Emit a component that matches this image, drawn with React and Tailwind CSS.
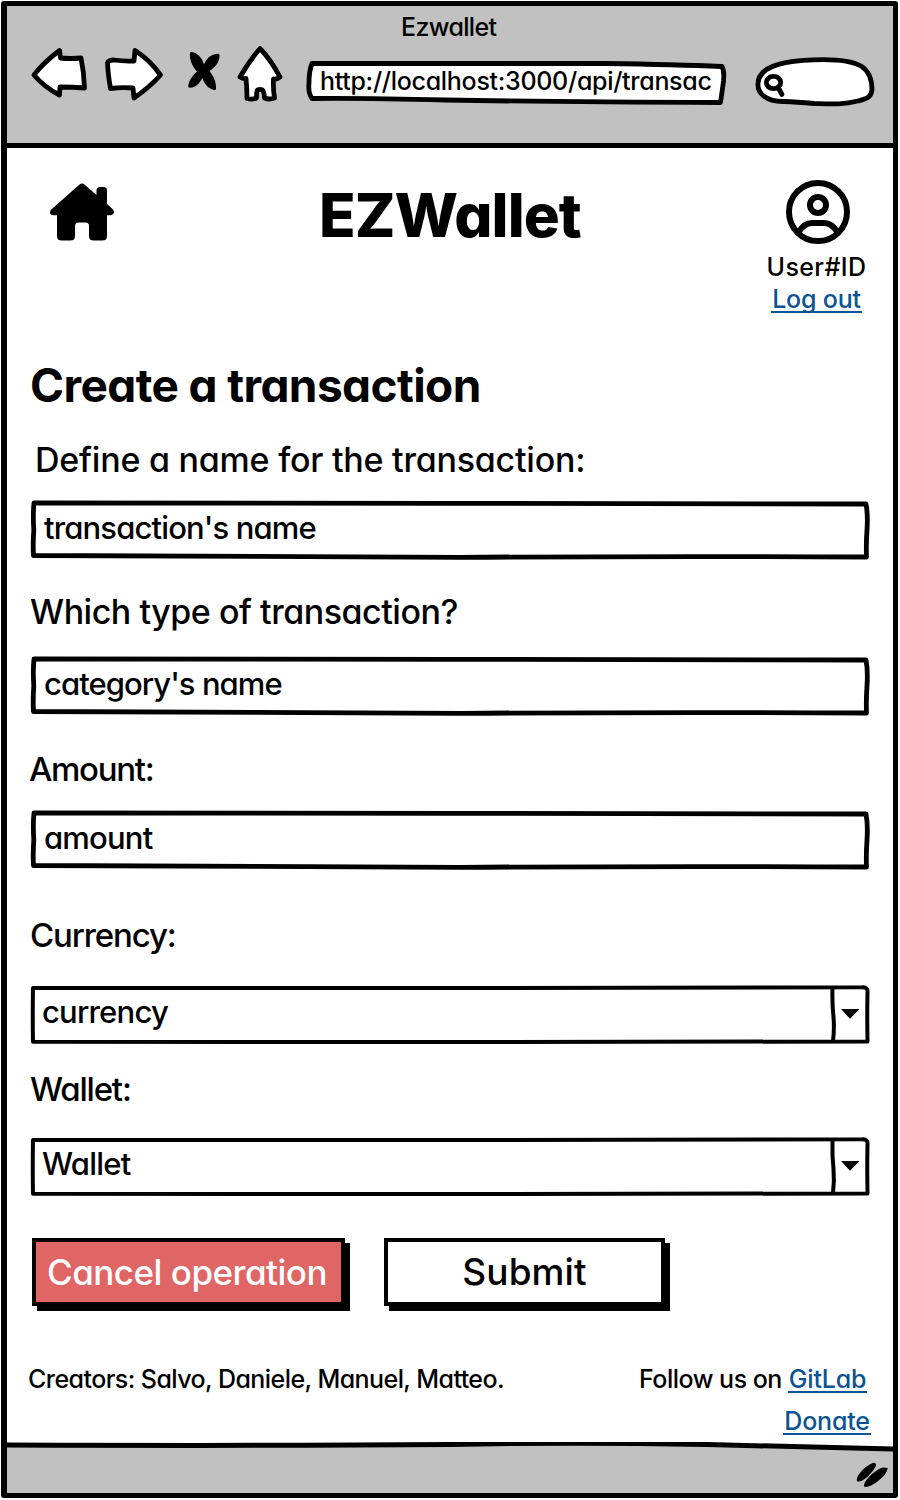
import React from "react";

const outline = { fill: "#fff", stroke: "#000", strokeWidth: 4.8, strokeLinejoin: "round", strokeLinecap: "round" };

function BackArrow() {
  return (
    <svg className="ml-[24px] mt-[40px] h-[54px] w-[58px] shrink-0" viewBox="0 0 58 54" {...outline}>
      <path d="M3 29 Q12 17 28.5 4.5 L29.5 12 Q40 13 50 12 Q53 26 53.5 42 Q42 41 29 41 L28.5 49 Q13 41 3 29Z" />
    </svg>
  );
}

function ForwardArrow() {
  return (
    <svg className="ml-[15px] mt-[40px] h-[57px] w-[60px] shrink-0" viewBox="0 0 60 57" {...outline}>
      <path d="M3.5 17 Q4.500 14 10 14 Q20 15.500 30 15 L31 4.500 Q46 14 56.500 29 Q46 41 30 52 L29 42 Q18 41 6.500 42.500 Q4 28 3.500 17Z" />
    </svg>
  );
}

function StopCross() {
  return (
    <svg className="ml-[21px] mt-[44px] h-[42px] w-[36px] shrink-0" viewBox="0 0 36 42">
      <path d="M5 2.500 Q5.500 1.500 8 2.200 C14 4 17.500 9 19 14.500 C21 9 26 4 33 3.800 Q34.600 3.800 34.600 5.500 C34.600 12 30.500 17 24.500 21 C28.500 26 31.500 32 31 39 Q30.800 40.500 29 40 C23 38.500 19.500 34 17.300 28 C14.500 33.500 11 37.500 5 37.800 Q3 38 3.300 36 C3.800 30.500 7.500 25.500 12 21.500 C8 17 4 10 5 2.500Z" />
    </svg>
  );
}

function HomeOutline() {
  return (
    <svg className="ml-[14px] mt-[39px] h-[58px] w-[50px] shrink-0" viewBox="0 0 50 58" {...outline}>
      <path d="M25 3.500 Q36 15 45 32 Q41 35 38.500 34 Q38 44 39.500 53 Q34 55 29.500 53 Q29 46 27.500 45 Q25 44 22.500 45 Q21.500 46 21.500 53 Q17 55 12 53.500 Q12 43 11 33.500 Q8 34 5 32 Q15 15 25 3.500Z" />
    </svg>
  );
}

function House() {
  return (
    <svg className="ml-[42px] mt-[34px] h-[60px] w-[66px] shrink-0" viewBox="0 0 66 60">
      <path d="M30.500 2.600 Q33 0.600 35.500 2.600 L47.500 13 V8.500 Q47.500 5 51 5 H54.500 Q58 5 58 8.500 V22 L64 27.500 Q65.500 29.500 64.500 31.500 Q63.500 33.200 61.500 33.200 H58 V54 Q58 58.500 53.500 58.500 H44.500 Q40 58.500 40 54 V44 Q40 40.500 36.500 40.500 H29.500 Q26 40.500 26 44 V54 Q26 58.500 21.500 58.500 H12.500 Q8 58.500 8 54 V33.200 H4 Q2 33.200 1.200 31.500 Q0.500 29.500 2 27.800Z" />
    </svg>
  );
}

function UserBadge() {
  return (
    <svg className="h-[64px] w-[64px]" viewBox="0 0 64 64" fill="none" stroke="#000" strokeWidth="6">
      <circle cx="32" cy="32" r="29" />
      <circle cx="32" cy="25" r="8" />
      <path d="M12.500 52.500 Q18 43 26 43 H38 Q46 43 51.500 52.500" />
    </svg>
  );
}

function Field({ children }) {
  return (
    <div className="relative ml-[23px] flex h-[60px] w-[841px] shrink-0">
      <svg className="absolute inset-0 h-[60px] w-[841px]" viewBox="0 0 841 60" {...outline}>
        <path d="M4 3 Q220 2.500 420 3.300 Q650 2.800 836 4 Q838 14 837 30 Q836 44 836.500 57 Q640 56 430 57.300 Q200 57 3.500 55.500 Q2.800 44 3.800 30 Q2.800 14 4 3Z" />
      </svg>
      {children}
    </div>
  );
}

function Select({ children }) {
  return (
    <div className="relative ml-[23px] flex h-[59px] w-[841px] shrink-0 mb-[-1px]">
      <svg className="absolute inset-0 h-[59px] w-[841px]" viewBox="0 0 841 59" {...outline} strokeWidth="4">
        <path d="M3 3 Q250 2.500 420 3 Q650 2.500 832 2.200 Q837.500 2 837.500 6 Q837 30 837.500 56.500 Q600 57 420 57 Q200 56.500 3 56.800 Q2.500 30 3 3Z" />
        <path d="M802.500 3 Q802 18 803.500 32 Q804.500 44 803 56" fill="none" />
        <path d="M811 24 H829.500 L820 33.800Z" fill="#000" stroke="none" />
      </svg>
      {children}
    </div>
  );
}

export default function App() {
  return (
    <div className="h-[1500px] w-[900px] overflow-hidden bg-white pl-px pt-px font-['Inter','Liberation_Sans',sans-serif] font-medium text-black [font-feature-settings:'cv11']">
      <div className="flex h-[1497px] w-[897px] flex-col overflow-hidden rounded-[3px] border-x-[5px] border-y-[5px] border-l-[6px] border-black bg-white">
        {/* Browser chrome */}
        <div className="relative flex h-[142px] shrink-0 border-b-[5px] border-black bg-[#c1c1c1]">
          <div className="absolute left-0 top-0 w-full pl-[394px] pt-[1px] text-[25px] leading-[40px] tracking-[-0.65px]">Ezwallet</div>
          <BackArrow />
          <ForwardArrow />
          <StopCross />
          <HomeOutline />
          <div className="relative ml-[21px] mt-[53px] h-[46px] w-[422px] shrink-0">
            <svg className="absolute inset-0 h-[46px] w-[422px]" viewBox="0 0 422 46" {...outline}>
              <path d="M6 10.500 Q7 10.500 6 10.500 Q150 10.700 300 10.500 Q370 11.500 416 13.500 Q418.500 18 417.500 28 Q416.500 36 414.500 49.500 Q250 49 140 47 Q60 45 6 45.500 Q2 40 3 30 Q3 18 6 10.500Z" transform="translate(0 -6)" />
            </svg>
            <span className="relative ml-[14px] block whitespace-nowrap text-[25px] leading-[44px] tracking-[-0.3px]">http://localhost:3000/api/transac</span>
          </div>
          <svg className="ml-[26px] mt-[50px] h-[52px] w-[122px] shrink-0" viewBox="0 0 122 52" {...outline}>
            <path d="M30 45.500 C12 46 3 37 4 27 C5 12 24 5 60 3.800 C80 3 98 5 107 10 C115 15 118 24 118 34 C117 42 112 43 104 45 C88 49 76 48 60 47.500 C48 46.500 42 46 30 45.500Z" />
            <ellipse cx="19.500" cy="26.500" rx="7.200" ry="6.200" />
            <path d="M24.500 32 L28 38.500" />
          </svg>
        </div>

        {/* Page */}
        <div className="flex h-[1294px] shrink-0 flex-col">
          <div className="flex h-[212px] shrink-0">
            <House />
            <div className="ml-[204px] mt-[27px] w-[280px] whitespace-nowrap text-[60px] font-extrabold leading-[80px] tracking-[-0.9px]">EZWallet</div>
            <div className="ml-[149px] mt-[32px] flex w-[140px] flex-col items-center whitespace-nowrap text-[25px]">
              <UserBadge />
              <span className="mt-[3px] h-[33px] leading-[40px] tracking-[0.4px] pr-[3px]">User#ID</span>
              <a className="mr-[3px] h-[33px] border-b-2 border-[#0b5394] px-px leading-[38px] tracking-[-0.2px] text-[#0b5394]">Log out</a>
            </div>
          </div>

          <h1 className="ml-[23px] h-[50px] shrink-0 text-[46px] font-bold leading-[50px] tracking-[-0.6px]">Create a transaction</h1>

          <label className="ml-[28px] mt-[30px] h-[40px] shrink-0 text-[34px] leading-[40px] tracking-[-0.23px]">Define a name for the transaction:</label>
          <div className="mt-[20px] flex">
            <Field><span className="relative ml-[14px] text-[31px] leading-[56px] tracking-[-0.85px]">transaction's name</span></Field>
          </div>

          <label className="ml-[23px] mt-[32px] h-[40px] shrink-0 text-[34px] leading-[40px] tracking-[-0.47px]">Which type of transaction?</label>
          <div className="mt-[24px] flex">
            <Field><span className="relative ml-[14px] text-[31px] leading-[56px] tracking-[-0.95px]">category's name</span></Field>
          </div>

          <label className="ml-[22px] mt-[33px] h-[40px] shrink-0 text-[33px] leading-[40px] tracking-[-1.3px]">Amount:</label>
          <div className="mt-[21px] flex">
            <Field><span className="relative ml-[14px] text-[31px] leading-[56px] tracking-[-0.8px]">amount</span></Field>
          </div>

          <label className="ml-[23px] mt-[45px] h-[40px] shrink-0 text-[33px] leading-[40px] tracking-[-1.15px]">Currency:</label>
          <div className="mt-[30px] flex">
            <Select><span className="relative ml-[12px] text-[31px] leading-[54px] tracking-[-0.8px]">currency</span></Select>
          </div>

          <label className="ml-[23px] mt-[26px] h-[40px] shrink-0 text-[33px] leading-[40px] tracking-[-1.2px]">Wallet:</label>
          <div className="mt-[28px] flex">
            <Select><span className="relative ml-[12px] text-[31px] leading-[54px] tracking-[-0.75px]">Wallet</span></Select>
          </div>

          <div className="ml-[25px] mt-[43px] flex h-[73px] shrink-0 gap-[39px]">
            <button className="h-[68px] w-[313px] whitespace-nowrap border-4 border-black bg-[#e06666] pr-[3px] text-[35px] leading-[60px] tracking-[-0.5px] text-white shadow-[5px_5px_0_#000]">Cancel operation</button>
            <button className="h-[68px] w-[281px] whitespace-nowrap border-4 border-black bg-white text-[37px] leading-[60px] tracking-[0.1px] shadow-[5px_5px_0_#000]">Submit</button>
          </div>

          <div className="mt-[48px] flex h-[40px] shrink-0 whitespace-nowrap text-[25px] leading-[40px]">
            <span className="ml-[21px] w-[611px] tracking-[-0.56px]">Creators: Salvo, Daniele, Manuel, Matteo.</span>
            <span className="w-[149px] tracking-[-0.5px]">Follow us on</span>
            <a className="h-[34px] w-[79px] border-b-2 border-[#0b5394] text-center tracking-[-0.2px] text-[#0b5394]">GitLab</a>
          </div>
          <div className="ml-[776px] mt-[2px] flex whitespace-nowrap text-[25px] leading-[40px]">
            <a className="h-[34px] w-[88px] border-b-2 border-[#0b5394] text-center tracking-[-0.2px] text-[#0b5394]">Donate</a>
          </div>
        </div>

        {/* Status bar */}
        <svg className="h-[52px] w-[886px] shrink-0" viewBox="0 0 886 52">
          <path d="M0 3 Q250 4 443 2.500 Q560 0 700 2.500 Q800 5 886 7 V52 H0Z" fill="#c1c1c1" />
          <path d="M0 3 Q250 4 443 2.500 Q560 0 700 2.500 Q800 5 886 7" fill="none" stroke="#000" strokeWidth="5" />
          <path d="M850 39 C848 34 860 22 867 20.700 C871 22 869 25 864 31 C859 37 853 41 850 39Z" />
          <path d="M857 44.500 C856 39 869 27 876 25.500 L880.700 26 C880 31 876 35 871 39 C865 44 859 46 857 44.500Z" />
        </svg>
      </div>
    </div>
  );
}
